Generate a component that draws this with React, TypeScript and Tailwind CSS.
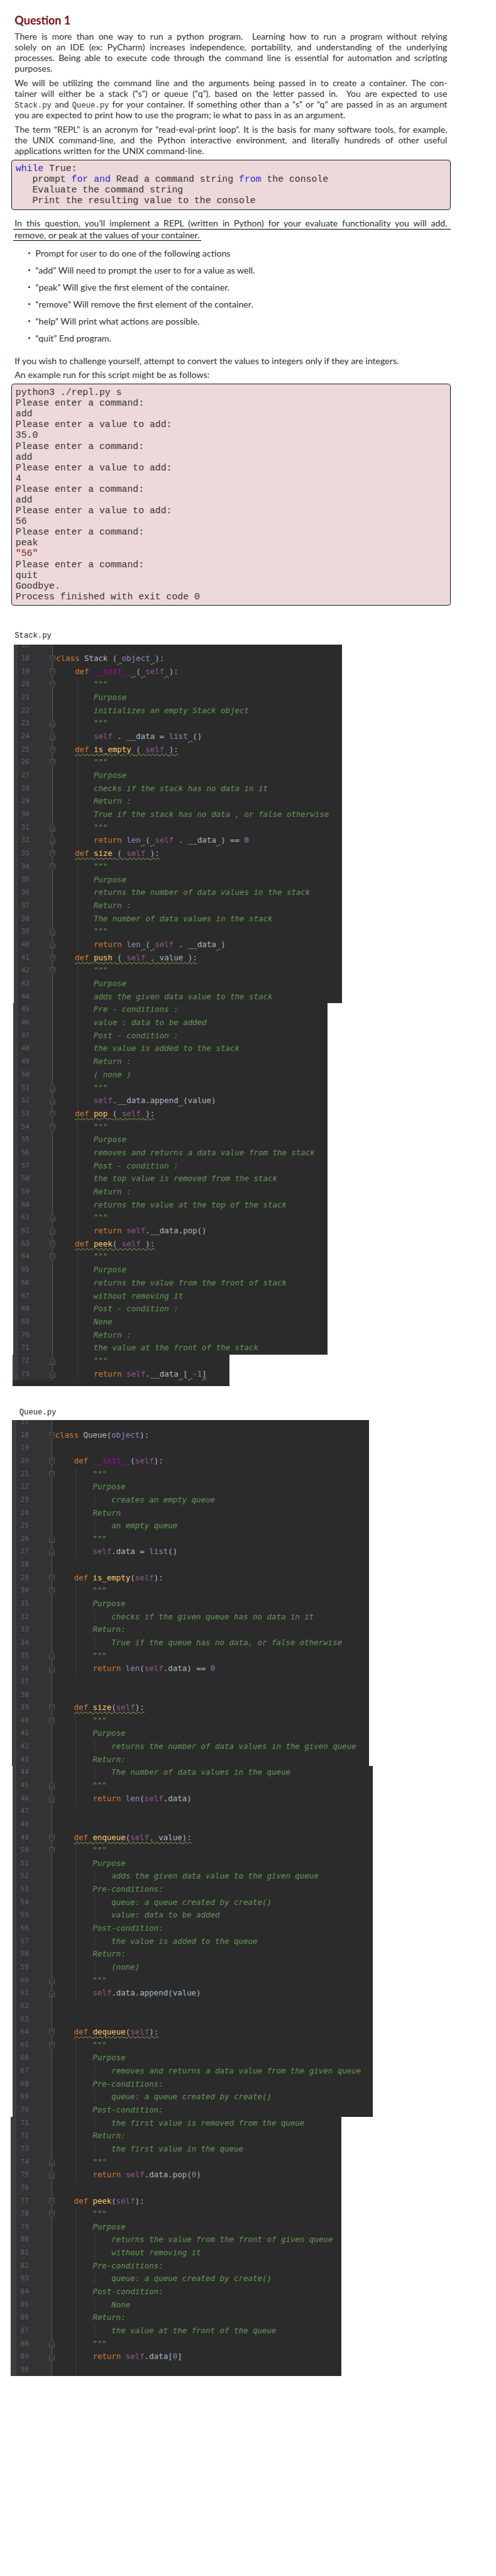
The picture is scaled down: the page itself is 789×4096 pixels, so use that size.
import type { ReactNode } from 'react'

type Kind = 'k' | 'f' | 's' | 'b' | 't' | 'd' | 'n' | 'm' | 'w'
type Tok = [Kind, string]
type Row = string | Tok[] | { wave: string; toks: Tok[] }

const tone: Record<Kind, string> = {
  k: 'text-[#cc7832]',
  f: 'text-[#ffc66d]',
  s: 'text-[#94558d]',
  b: 'text-[#8888c6]',
  t: 'text-[#a9b7c6]',
  d: 'text-[#629755] italic',
  n: 'text-[#6897bb]',
  m: 'text-[#b200b2]',
  w: 'text-[#a9b7c6] underline decoration-wavy decoration-[#a3a35f] decoration-1 underline-offset-2',
}

const range = (a: number, b: number) => Array.from({ length: b - a + 1 }, (_, i) => a + i)
const QQ = '        """'
const I = '        '
const J = '            '

const stackRows: Row[] = [
  '',
  [['k', 'class '], ['t', 'Stack ('], ['w', ' '], ['b', 'object'], ['w', ' '], ['t', '):']],
  [['t', '    '], ['k', 'def '], ['m', '__init__'], ['w', ' '], ['t', '('], ['w', ' '], ['s', 'self'], ['w', ' '], ['t', '):']],
  QQ,
  I + 'Purpose',
  I + 'initializes an empty Stack object',
  QQ,
  [['t', I], ['s', 'self'], ['t', ' . __data = '], ['b', 'list'], ['w', ' '], ['t', '()']],
  { wave: '    ', toks: [['k', 'def '], ['f', 'is_empty '], ['t', '( '], ['s', 'self '], ['t', '):']] },
  QQ,
  I + 'Purpose',
  I + 'checks if the stack has no data in it',
  I + 'Return :',
  I + 'True if the stack has no data , or false otherwise',
  QQ,
  [['t', I], ['k', 'return '], ['b', 'len'], ['w', ' '], ['t', '('], ['w', ' '], ['s', 'self'], ['t', ' . __data'], ['w', ' '], ['t', ') == '], ['n', '0']],
  { wave: '    ', toks: [['k', 'def '], ['f', 'size '], ['t', '( '], ['s', 'self '], ['t', '):']] },
  QQ,
  I + 'Purpose',
  I + 'returns the number of data values in the stack',
  I + 'Return :',
  I + 'The number of data values in the stack',
  QQ,
  [['t', I], ['k', 'return '], ['b', 'len'], ['w', ' '], ['t', '('], ['w', ' '], ['s', 'self'], ['t', ' . __data'], ['w', ' '], ['t', ')']],
  { wave: '    ', toks: [['k', 'def '], ['f', 'push '], ['t', '( '], ['s', 'self '], ['k', ', '], ['t', 'value ):']] },
  QQ,
  I + 'Purpose',
  I + 'adds the given data value to the stack',
  I + 'Pre - conditions :',
  I + 'value : data to be added',
  I + 'Post - condition :',
  I + 'the value is added to the stack',
  I + 'Return :',
  I + '( none )',
  QQ,
  [['t', I], ['s', 'self'], ['t', '.__data.append'], ['w', ' '], ['t', '(value)']],
  { wave: '    ', toks: [['k', 'def '], ['f', 'pop '], ['t', '( '], ['s', 'self '], ['t', '):']] },
  QQ,
  I + 'Purpose',
  I + 'removes and returns a data value from the stack',
  I + 'Post - condition :',
  I + 'the top value is removed from the stack',
  I + 'Return :',
  I + 'returns the value at the top of the stack',
  QQ,
  [['t', I], ['k', 'return '], ['s', 'self'], ['t', '.__data.pop()']],
  { wave: '    ', toks: [['k', 'def '], ['f', 'peek'], ['t', '( '], ['s', 'self '], ['t', '):']] },
  QQ,
  I + 'Purpose',
  I + 'returns the value from the front of stack',
  I + 'without removing it',
  I + 'Post - condition :',
  I + 'None',
  I + 'Return :',
  I + 'the value at the front of the stack',
  QQ,
  [['t', I], ['k', 'return '], ['s', 'self'], ['t', '.__data'], ['w', ' '], ['t', '['], ['w', ' '], ['n', '-1'], ['w', ']']],
]

const qDef = (name: string, args: Tok[], wavy = false): Row => {
  const toks: Tok[] = [['k', 'def '], ['f', name], ['t', '('], ...args, ['t', '):']]
  return wavy ? { wave: '    ', toks } : [['t', '    '], ...toks]
}

const queueRows: Row[] = [
  '',
  [['k', 'class '], ['t', 'Queue('], ['b', 'object'], ['t', '):']],
  '',
  [['t', '    '], ['k', 'def '], ['m', '__init__'], ['t', '('], ['s', 'self'], ['t', '):']],
  QQ,
  I + 'Purpose',
  J + 'creates an empty queue',
  I + 'Return',
  J + 'an empty queue',
  QQ,
  [['t', I], ['s', 'self'], ['t', '.data = '], ['b', 'list'], ['t', '()']],
  '',
  qDef('is_empty', [['s', 'self']]),
  QQ,
  I + 'Purpose',
  J + 'checks if the given queue has no data in it',
  I + 'Return:',
  J + 'True if the queue has no data, or false otherwise',
  QQ,
  [['t', I], ['k', 'return '], ['b', 'len'], ['t', '('], ['s', 'self'], ['t', '.data) == '], ['n', '0']],
  '',
  '',
  qDef('size', [['s', 'self']], true),
  QQ,
  I + 'Purpose',
  J + 'returns the number of data values in the given queue',
  I + 'Return:',
  J + 'The number of data values in the queue',
  QQ,
  [['t', I], ['k', 'return '], ['b', 'len'], ['t', '('], ['s', 'self'], ['t', '.data)']],
  '',
  '',
  qDef('enqueue', [['s', 'self'], ['k', ', '], ['t', 'value']], true),
  QQ,
  I + 'Purpose',
  J + 'adds the given data value to the given queue',
  I + 'Pre-conditions:',
  J + 'queue: a queue created by create()',
  J + 'value: data to be added',
  I + 'Post-condition:',
  J + 'the value is added to the queue',
  I + 'Return:',
  J + '(none)',
  QQ,
  [['t', I], ['s', 'self'], ['t', '.data.append(value)']],
  '',
  '',
  qDef('dequeue', [['s', 'self']], true),
  QQ,
  I + 'Purpose',
  J + 'removes and returns a data value from the given queue',
  I + 'Pre-conditions:',
  J + 'queue: a queue created by create()',
  I + 'Post-condition:',
  J + 'the first value is removed from the queue',
  I + 'Return:',
  J + 'the first value in the queue',
  QQ,
  [['t', I], ['k', 'return '], ['s', 'self'], ['t', '.data.pop('], ['n', '0'], ['t', ')']],
  '',
  qDef('peek', [['s', 'self']]),
  QQ,
  I + 'Purpose',
  J + 'returns the value from the front of given queue',
  J + 'without removing it',
  I + 'Pre-conditions:',
  J + 'queue: a queue created by create()',
  I + 'Post-condition:',
  J + 'None',
  I + 'Return:',
  J + 'the value at the front of the queue',
  QQ,
  [['t', I], ['k', 'return '], ['s', 'self'], ['t', '.data['], ['n', '0'], ['t', ']']],
  '',
]

function FoldMark({ up }: { up?: boolean }) {
  return (
    <svg
      width="9"
      height="12"
      viewBox="0 0 9 12"
      className={`absolute right-[-5px] z-10 ${up ? 'top-[4px] rotate-180' : 'top-[5px]'}`}
    >
      <path d="M.5.5h8v7l-4 4-4-4z" fill="#313335" stroke="#55585a" />
      <path d="M2.5 4h4" stroke="#55585a" />
    </svg>
  )
}

function Tokens({ toks }: { toks: Tok[] }) {
  return (
    <>
      {toks.map(([kind, text], i) => (
        <span key={i} className={tone[kind]}>
          {text}
        </span>
      ))}
    </>
  )
}

function CodeLine({ row }: { row: Row }) {
  if (typeof row === 'string') return <span className={tone.d}>{row}</span>
  if (Array.isArray(row)) return <Tokens toks={row} />
  return (
    <>
      <span>{row.wave}</span>
      <span className="underline decoration-wavy decoration-[#a3a35f] decoration-1 underline-offset-2">
        <Tokens toks={row.toks} />
      </span>
    </>
  )
}

interface Section {
  from: number
  to: number
  box: string
  band: string
}

interface PanelProps {
  rows: Row[]
  sections: Section[]
  rowClass: string
  shift: string
  gutter: string
  codePad: string
  guideA: string
  guideB: string
  opens: number[]
  closes: number[]
  guidesA: number[]
  guidesB: number[]
}

function CodePanel(p: PanelProps) {
  return (
    <div className="font-['DejaVu_Sans_Mono',monospace] text-[12.45px]">
      {p.sections.map((sec, si) => {
        const nums = range(sec.from, sec.to)
        return (
          <div key={si} className={`flex overflow-hidden bg-[#2b2b2b] ${sec.box}`}>
            <div className={`shrink-0 bg-[#3c3f41] ${sec.band}`} />
            <div className={`relative shrink-0 border-r border-[#55585a] bg-[#313335] ${p.gutter}`}>
              <div className={si === 0 ? p.shift : ''}>
                {nums.map((n) => (
                  <div key={n} className={`relative text-[10.9px] text-[#606366] ${p.rowClass}`}>
                    {n}
                    {p.opens.includes(n) && <FoldMark />}
                    {p.closes.includes(n) && <FoldMark up />}
                  </div>
                ))}
              </div>
            </div>
            <div className={`min-w-0 flex-1 ${p.codePad}`}>
              <div className={si === 0 ? p.shift : ''}>
                {nums.map((n) => (
                  <div key={n} className={`relative whitespace-pre ${p.rowClass}`}>
                    {p.guidesA.includes(n) && <span className={`absolute top-0 bottom-0 w-px bg-[#3e3e3e] ${p.guideA}`} />}
                    {p.guidesB.includes(n) && <span className={`absolute top-0 bottom-0 w-px bg-[#3e3e3e] ${p.guideB}`} />}
                    <CodeLine row={p.rows[n - 17]} />
                  </div>
                ))}
              </div>
            </div>
          </div>
        )
      })}
    </div>
  )
}

function Line({ children, just, className = '' }: { children: ReactNode; just?: boolean; className?: string }) {
  return (
    <div className={`h-[17.15px] leading-[17.15px] ${just ? 'text-[14px] text-justify [text-align-last:justify]' : ''} ${className}`}>
      {children}
    </div>
  )
}

function Mono({ children }: { children: ReactNode }) {
  return <span className="font-['Liberation_Mono',monospace] text-[12.2px]">{children}</span>
}

function ConsoleBox({ children, className }: { children: ReactNode; className: string }) {
  return (
    <div className={`w-[699.8px] -ml-[5.7px] bg-[#edd9d9] font-['Liberation_Mono',monospace] text-[14.8px] text-[#333] ${className}`}>
      <div className="rounded-[5px] border border-[#1c1c1c] pt-[4.7px] pb-[4.4px] pl-[6.2px]">{children}</div>
    </div>
  )
}

const bullets = [
  'Prompt for user to do one of the following actions',
  '“add” Will need to prompt the user to for a value as well.',
  '“peak” Will give the first element of the container.',
  '“remove” Will remove the first element of the container.',
  '“help” Will print what actions are possible.',
  '“quit” End program.',
]

const runLog = [
  'python3 ./repl.py s',
  'Please enter a command:',
  'add',
  'Please enter a value to add:',
  '35.0',
  'Please enter a command:',
  'add',
  'Please enter a value to add:',
  '4',
  'Please enter a command:',
  'add',
  'Please enter a value to add:',
  '56',
  'Please enter a command:',
  'peak',
  '"56"',
  'Please enter a command:',
  'quit',
  'Goodbye.',
  'Process finished with exit code 0',
]

export default function App() {
  return (
    <div className="min-h-[4096px] bg-white pt-[20px]">
      <div className="ml-[23.3px] w-[688.1px] font-['Lato',sans-serif] text-[14.2px] text-[#2f2f2f]">
        <h1 className="h-[24px] text-[18px] leading-[24px] font-bold text-[#7b1113]">Question 1</h1>

        <div className="mt-[4.8px]">
          <Line just>There is more than one way to run a python program.&nbsp; Learning how to run a program without relying</Line>
          <Line just>solely on an IDE (ex: PyCharm) increases independence, portability, and understanding of the underlying</Line>
          <Line just>processes. Being able to execute code through the command line is essential for automation and scripting</Line>
          <Line>purposes.</Line>
        </div>
        <div className="mt-[5.4px]">
          <Line just>We will be utilizing the command line and the arguments being passed in to create a container. The con-</Line>
          <Line just>tainer will either be a stack (“s”) or queue (“q”), based on the letter passed in.&nbsp; You are expected to use</Line>
          <Line just>
            <Mono>Stack.py</Mono> and <Mono>Queue.py</Mono> for your container. If something other than a “s” or “q” are passed in as an argument
          </Line>
          <Line>you are expected to print how to use the program; ie what to pass in as an argument.</Line>
        </div>
        <div className="mt-[5.6px]">
          <Line just>The term “REPL” is an acronym for “read-eval-print loop”. It is the basis for many software tools, for example,</Line>
          <Line just>the UNIX command-line, and the Python interactive environment, and literally hundreds of other useful</Line>
          <Line>applications written for the UNIX command-line.</Line>
        </div>

        <ConsoleBox className="mt-[5.5px]">
          <div className="leading-[17.3px]"><span className="text-[#2a2ad6]">while</span> True:</div>
          <div className="leading-[17.3px] whitespace-pre">   prompt <span className="text-[#2a2ad6]">for</span> <span className="text-[#2a2ad6]">and</span> Read a command string <span className="text-[#2a2ad6]">from</span> the console</div>
          <div className="leading-[17.3px] whitespace-pre">   Evaluate the command string</div>
          <div className="leading-[17.3px] whitespace-pre">   Print the resulting value to the console</div>
        </ConsoleBox>

        <div className="mt-[12.4px] -ml-[2.3px] w-[696.4px] border-b border-black pr-[6px] pl-[2.3px]">
          <Line just>In this question, you’ll implement a REPL (written in Python) for your evaluate functionality you will add,</Line>
        </div>
        <div className="-ml-[2.3px] w-fit border-b border-black pl-[2.3px] pr-[2px]">
          <Line>remove, or peak at the values of your container.</Line>
        </div>

        <ul className="mt-[6px]">
          {bullets.map((b) => (
            <li key={b} className="flex h-[27.07px] items-center">
              <span className="ml-[22px] mr-[8px] size-[3px] rounded-full bg-[#333]" />
              {b}
            </li>
          ))}
        </ul>

        <Line className="mt-[13.7px]">If you wish to challenge yourself, attempt to convert the values to integers only if they are integers.</Line>
        <Line className="mt-[5.4px]">An example run for this script might be as follows:</Line>

        <ConsoleBox className="mt-[5.9px]">
          {runLog.map((l, i) => (
            <div key={i} className={`leading-[17.1px] ${l === '"56"' ? 'text-[#7a1f1f]' : ''}`}>{l}</div>
          ))}
        </ConsoleBox>
      </div>

      <div className="mt-[39.9px] ml-[23.3px] h-[17px] font-['Liberation_Mono',monospace] text-[12.2px] leading-[17px] text-[#222]">Stack.py</div>
      <div className="mt-[5px]">
        <CodePanel
          rows={stackRows}
          rowClass="h-[20.69px] leading-[20.69px]"
          shift="-mt-[9.09px]"
          gutter="w-[56.2px] pl-[6px]"
          codePad="pl-[5px]"
          guideA="left-[33.8px]"
          guideB="left-[63px]"
          sections={[
            { from: 17, to: 44, box: 'ml-[21.8px] w-[521.9px]', band: 'w-[6px]' },
            { from: 45, to: 71, box: 'ml-[21.1px] w-[500px]', band: 'w-[6.7px]' },
            { from: 72, to: 73, box: 'ml-[19.6px] w-[345.1px] pb-[9px]', band: 'w-[8.2px]' },
          ]}
          opens={[18, 19, 20, 25, 26, 33, 34, 41, 42, 53, 54, 63, 64]}
          closes={[23, 24, 31, 32, 39, 40, 51, 52, 61, 62, 72, 73]}
          guidesA={[...range(20, 24), ...range(26, 32), ...range(34, 40), ...range(42, 52), ...range(54, 62), ...range(64, 73)]}
          guidesB={[]}
        />
      </div>

      <div className="mt-[33.5px] ml-[30.8px] h-[17px] font-['Liberation_Mono',monospace] text-[12.2px] leading-[17px] text-[#222]">Queue.py</div>
      <div className="mt-[3.6px]">
        <CodePanel
          rows={queueRows}
          rowClass="h-[20.65px] leading-[20.65px]"
          shift="-mt-[7.38px]"
          gutter="w-[57.2px] pl-[6.3px]"
          codePad="pl-[4px]"
          guideA="left-[32.8px]"
          guideB="left-[62.9px]"
          sections={[
            { from: 17, to: 43, box: 'ml-[18.8px] w-[567.8px]', band: 'w-[7.5px]' },
            { from: 44, to: 70, box: 'ml-[20.2px] w-[572.4px]', band: 'w-[6.1px]' },
            { from: 71, to: 90, box: 'ml-[16.5px] w-[526.5px]', band: 'w-[9.8px]' },
          ]}
          opens={[18, 20, 21, 29, 30, 39, 40, 49, 50, 64, 65, 77, 78]}
          closes={[26, 27, 35, 36, 45, 46, 60, 61, 74, 75, 88, 89]}
          guidesA={[...range(21, 27), ...range(30, 36), ...range(40, 46), ...range(50, 61), ...range(65, 75), ...range(78, 90)]}
          guidesB={[23, 25, 32, 34, 42, 44, 52, 54, 55, 57, 59, 67, 69, 71, 73, 80, 81, 83, 85, 87]}
        />
      </div>
    </div>
  )
}
